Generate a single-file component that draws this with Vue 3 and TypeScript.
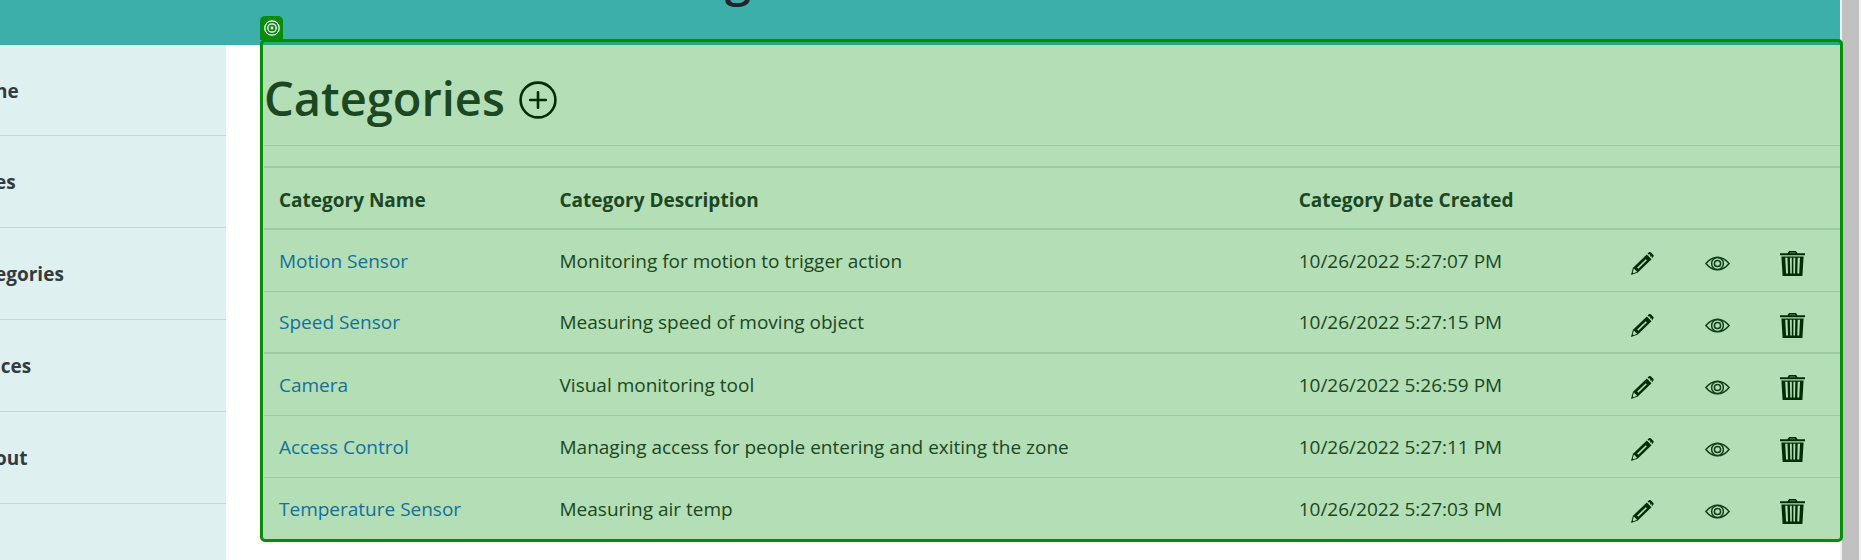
<script setup lang="ts">
interface Category {
  name: string
  description: string
  created: string
}

const navItems: string[] = ['ne', 'es', 'egories', 'ices', 'out']

const categories: Category[] = [
  { name: 'Motion Sensor', description: 'Monitoring for motion to trigger action', created: '10/26/2022 5:27:07 PM' },
  { name: 'Speed Sensor', description: 'Measuring speed of moving object', created: '10/26/2022 5:27:15 PM' },
  { name: 'Camera', description: 'Visual monitoring tool', created: '10/26/2022 5:26:59 PM' },
  { name: 'Access Control', description: 'Managing access for people entering and exiting the zone', created: '10/26/2022 5:27:11 PM' },
  { name: 'Temperature Sensor', description: 'Measuring air temp', created: '10/26/2022 5:27:03 PM' },
]
</script>

<template>
  <div class="page">
    <div class="content">
      <header class="topbar"><span class="brand">g</span></header>
      <div class="body">
        <nav class="sidebar">
          <a v-for="item in navItems" :key="item" class="nav-link" href="#">{{ item }}</a>
        </nav>
        <main class="main">
          <section class="panel">
            <span class="tag">
              <svg viewBox="0 0 16 16" width="16" height="16" fill="none" stroke="#fff">
                <circle cx="8" cy="8" r="7.2" stroke-width="1.3" />
                <circle cx="8" cy="8" r="4.2" stroke-width="1.3" />
                <circle cx="8" cy="8" r="1.4" fill="#fff" stroke="none" />
              </svg>
            </span>
            <div class="heading">
              <h1>Categories</h1>
              <button class="icon-btn add" type="button" aria-label="Add category">
                <svg viewBox="0 0 38 38" width="38" height="38" fill="none" stroke="#032d05" stroke-width="2.6" stroke-linecap="round">
                  <circle cx="19" cy="19" r="17.4" />
                  <path d="M19 11.2v15.6M11.2 19h15.6" />
                </svg>
              </button>
            </div>
            <table>
              <colgroup>
                <col class="c-name" /><col class="c-desc" /><col class="c-date" />
                <col class="c-act" /><col class="c-act" /><col class="c-act" />
              </colgroup>
              <thead>
                <tr>
                  <th scope="col">Category Name</th>
                  <th scope="col">Category Description</th>
                  <th scope="col">Category Date Created</th>
                  <th></th><th></th><th></th>
                </tr>
              </thead>
              <tbody>
                <tr v-for="c in categories" :key="c.name">
                  <td><a href="#">{{ c.name }}</a></td>
                  <td>{{ c.description }}</td>
                  <td>{{ c.created }}</td>
                  <td class="action">
                    <button class="icon-btn" type="button" aria-label="Edit">
                      <svg viewBox="0 0 25 25" width="25" height="25">
                        <path d="M1 24 3 16.8 16.8 3.4 21.5 8.2 7.8 21.4Z" fill="#032d05" />
                        <path d="M17.6 2.6 19.2 1.1Q20 .6 20.8 1.3L23.4 4Q24 4.8 23.4 5.6L22.2 7.3Z" fill="#032d05" />
                        <path d="M3.9 17.6 7.1 20.8 3.6 22.2 2.7 21.3ZM7.2 16.6 15.8 8.2 16.9 9.3 8.3 17.7ZM18.6 4.1 19.5 3.3 20.5 4.3 19.6 5.1ZM20.5 6 21.4 5.2 22.2 6 21.4 6.9Z" fill="#b4deb5" />
                      </svg>
                    </button>
                  </td>
                  <td class="action">
                    <button class="icon-btn" type="button" aria-label="View">
                      <svg viewBox="0 0 25 25" width="25" height="25" fill="none" stroke="#123f19" stroke-width="1.5">
                        <path d="M.9 12.5Q6 6.2 12.5 6.2T24.1 12.5Q19 18.8 12.5 18.8T.9 12.5Z" />
                        <circle cx="12.5" cy="12.5" r="5.9" />
                        <circle cx="12.5" cy="12.5" r="3.1" />
                      </svg>
                    </button>
                  </td>
                  <td class="action">
                    <button class="icon-btn" type="button" aria-label="Delete">
                      <svg viewBox="0 0 25 25" width="25" height="25">
                        <path d="M0 2.2H7.5L9 0H16L17.5 2.2H25V4.2H0ZM1.4 5.4H23.6L22.4 25H2.6Z" fill="#032d05" />
                        <path d="M9.4 2.2 10 1.4H15L15.6 2.2Z" fill="#6f9a70" />
                        <path d="M5.2 6.8H7.5L8 22.6H6.1ZM9.9 6.8H11.8V22.6H10.3ZM13.4 6.8H15.3L15 22.6H13.4ZM17.7 6.8H20L19.2 22.6H17.3Z" fill="#b4deb5" />
                      </svg>
                    </button>
                  </td>
                </tr>
              </tbody>
            </table>
          </section>
        </main>
      </div>
    </div>
    <div class="scroll"></div>
  </div>
</template>

<style>
body {
  margin: 0;
  background: #fff;
}
</style>

<style scoped>
* {
  box-sizing: border-box;
}
.page {
  display: flex;
  min-height: 100vh;
  font-family: "Open Sans", "Noto Sans", sans-serif;
  font-size: 19px;
  line-height: 30px;
  color: #1b4722;
}
.content {
  flex: 1;
  min-width: 0;
  display: flex;
  flex-direction: column;
}
.scroll {
  width: 21px;
  background: #c1c1c1;
  border-left: 2px solid #f1f1f1;
  border-right: 2px solid #f1f1f1;
}
.topbar {
  height: 45px;
  overflow: hidden;
  background: #3cafaa;
  padding-left: 39.4%;
}
.brand {
  display: block;
  margin-top: -52px;
  font-size: 47px;
  font-weight: 600;
  line-height: 60px;
  color: #212529;
}
.body {
  flex: 1;
  display: flex;
}
.sidebar {
  width: 226px;
  overflow: hidden;
  background: #def1f0;
}
.nav-link {
  display: flex;
  align-items: center;
  height: 92px;
  margin-left: -5px;
  border-bottom: 1px solid #c4d8d7;
  color: #343a40;
  font-weight: 700;
  text-decoration: none;
}
.nav-link:first-child {
  height: 91px;
  padding-top: 2px;
}
.main {
  flex: 1;
  min-width: 0;
  padding-left: 34px;
}
.panel {
  position: relative;
  margin: -6px -3px 0 0;
  padding-left: 1px;
  border: 3px solid #058d0b;
  border-radius: 5px;
  background: linear-gradient(#2ba57d 3px, #b4deb5 3px);
}
.tag {
  position: absolute;
  left: -3px;
  top: -26px;
  display: flex;
  align-items: center;
  justify-content: center;
  width: 23px;
  height: 24px;
  border-radius: 5px 5px 0 0;
  background: #058d0b;
}
.heading {
  display: flex;
  align-items: center;
  gap: 14px;
  height: 104px;
  padding-top: 12px;
  padding-bottom: 4px;
  margin-bottom: 20px;
  border-bottom: 1px solid #9ccaa4;
}
h1 {
  margin: 0;
  font-size: 47px;
  font-weight: 600;
  line-height: 60px;
}
.icon-btn {
  display: block;
  padding: 0;
  border: 0;
  background: none;
  cursor: pointer;
}
.icon-btn.add {
  padding-top: 4px;
}
.icon-btn svg {
  display: block;
}
table {
  width: 100%;
  table-layout: fixed;
  border-collapse: separate;
  border-spacing: 0;
  border-top: 2px solid #9ccaa4;
}
.c-name {
  width: 17.8%;
}
.c-desc {
  width: 46.9%;
}
.c-date {
  width: 21%;
}
th,
td {
  height: 62px;
  padding: 0 15px;
  border-bottom: 1px solid #9ccaa4;
  text-align: left;
  vertical-align: middle;
}
td.action {
  padding-top: 6px;
}
th {
  padding-top: 4px;
  border-bottom-width: 2px;
  font-weight: 700;
}
tbody tr:nth-child(2) td {
  border-bottom-width: 2px;
}
tbody tr:last-child td {
  height: 61px;
  border-bottom: 0;
}
td a {
  color: #12709a;
  text-decoration: none;
}
</style>
